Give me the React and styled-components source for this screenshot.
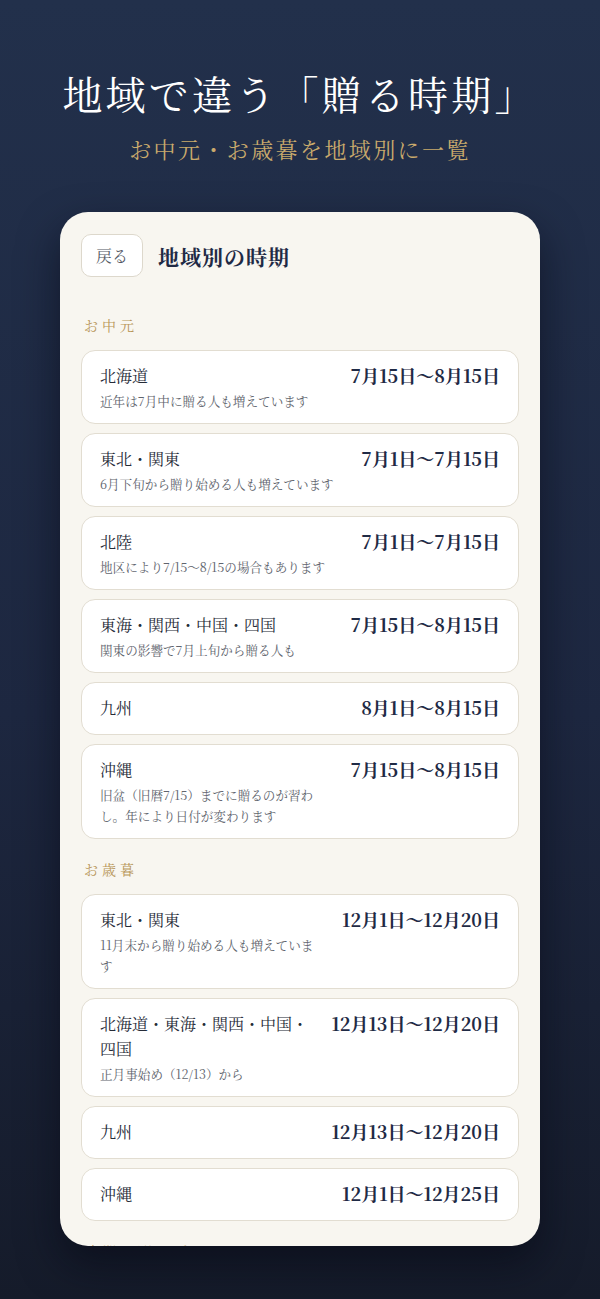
import React from 'react';
import styled, { createGlobalStyle } from 'styled-components';

const SERIF = `"Noto Serif CJK JP", "Noto Serif JP", "Liberation Serif", "Noto Sans CJK JP", serif`;

const GlobalStyle = createGlobalStyle`
    html, body {
        margin: 0;
        padding: 0;
    }
    body {
        font-family: ${SERIF};
        background: #1b2438;
    }
`;

const Page = styled.div`
    min-height: 1299px;
    background: linear-gradient(180deg, #22304b 0%, #1d2740 55%, #151b2a 100%);
    display: flex;
    flex-direction: column;
    align-items: center;
    padding-top: 68px;
    box-sizing: border-box;
    overflow: hidden;
`;

const Headline = styled.h1`
    margin: 0;
    font-size: 40px;
    line-height: 50px;
    font-weight: 400;
    color: #ffffff;
    letter-spacing: 3.2px;
`;

const Tagline = styled.p`
    margin: 16px 0 0;
    font-size: 22px;
    line-height: 30px;
    color: #c9aa6c;
    letter-spacing: 2.4px;
`;

const Card = styled.div`
    margin-top: 48px;
    width: 480px;
    height: 1034px;
    box-sizing: border-box;
    padding: 22px 21px;
    background: #f8f6f0;
    border-radius: 28px;
    overflow: hidden;
    box-shadow: 0 18px 40px rgba(5, 8, 18, 0.55);
`;

const Header = styled.div`
    display: flex;
    align-items: center;
    gap: 15px;
`;

const BackButton = styled.button`
    width: 62px;
    height: 43px;
    background: #ffffff;
    border: 1px solid #ddd8cc;
    border-radius: 10px;
    font-family: ${SERIF};
    font-size: 16px;
    color: #555a66;
    cursor: pointer;
`;

const CardTitle = styled.h2`
    margin: 0;
    font-size: 21px;
    font-weight: 700;
    color: #1f2a45;
    letter-spacing: 1px;
`;

const SectionLabel = styled.div`
    margin: ${p => p.$first ? '38px' : '20px'} 0 15px 3px;
    font-size: 14px;
    line-height: 20px;
    letter-spacing: 4px;
    color: #b8975a;
`;

const List = styled.div`
    display: flex;
    flex-direction: column;
    gap: 9px;
`;

const Row = styled.div`
    display: flex;
    align-items: flex-start;
    gap: 22px;
    min-height: 53px;
    box-sizing: border-box;
    padding: 12px 18px;
    background: #ffffff;
    border: 1px solid #e2ddd1;
    border-radius: 14px;
`;

const Info = styled.div`
    flex: 1;
    min-width: 0;
`;

const Region = styled.div`
    font-size: 16px;
    line-height: 25px;
    color: #262b37;
`;

const Note = styled.div`
    margin-top: 2px;
    font-size: 12.6px;
    line-height: 21px;
    color: #60646d;
`;

const Period = styled.div`
    flex: none;
    white-space: nowrap;
    font-size: 18px;
    line-height: 25px;
    font-weight: 700;
    color: #1f2a45;
`;

const chugen = [
    { region: '北海道', period: '7月15日〜8月15日', note: '近年は7月中に贈る人も増えています' },
    { region: '東北・関東', period: '7月1日〜7月15日', note: '6月下旬から贈り始める人も増えています' },
    { region: '北陸', period: '7月1日〜7月15日', note: '地区により7/15〜8/15の場合もあります' },
    { region: '東海・関西・中国・四国', period: '7月15日〜8月15日', note: '関東の影響で7月上旬から贈る人も' },
    { region: '九州', period: '8月1日〜8月15日' },
    { region: '沖縄', period: '7月15日〜8月15日', note: '旧盆（旧暦7/15）までに贈るのが習わし。年により日付が変わります' },
];

const seibo = [
    { region: '東北・関東', period: '12月1日〜12月20日', note: '11月末から贈り始める人も増えています' },
    { region: '北海道・東海・関西・中国・四国', period: '12月13日〜12月20日', note: '正月事始め（12/13）から' },
    { region: '九州', period: '12月13日〜12月20日' },
    { region: '沖縄', period: '12月1日〜12月25日' },
];

function Item({ region, period, note }) {
    return (
        <Row>
            <Info>
                <Region>{region}</Region>
                {note && <Note>{note}</Note>}
            </Info>
            <Period>{period}</Period>
        </Row>
    );
}

export default function App() {
    return (
        <>
            <GlobalStyle />
            <Page>
                <Headline>地域で違う「贈る時期」</Headline>
                <Tagline>お中元・お歳暮を地域別に一覧</Tagline>
                <Card>
                    <Header>
                        <BackButton>戻る</BackButton>
                        <CardTitle>地域別の時期</CardTitle>
                    </Header>
                    <SectionLabel $first>お中元</SectionLabel>
                    <List>
                        {chugen.map(it => <Item key={it.region} {...it} />)}
                    </List>
                    <SectionLabel>お歳暮</SectionLabel>
                    <List>
                        {seibo.map(it => <Item key={it.region} {...it} />)}
                    </List>
                    <SectionLabel>時期を選ぶポイント</SectionLabel>
                </Card>
            </Page>
        </>
    );
}
